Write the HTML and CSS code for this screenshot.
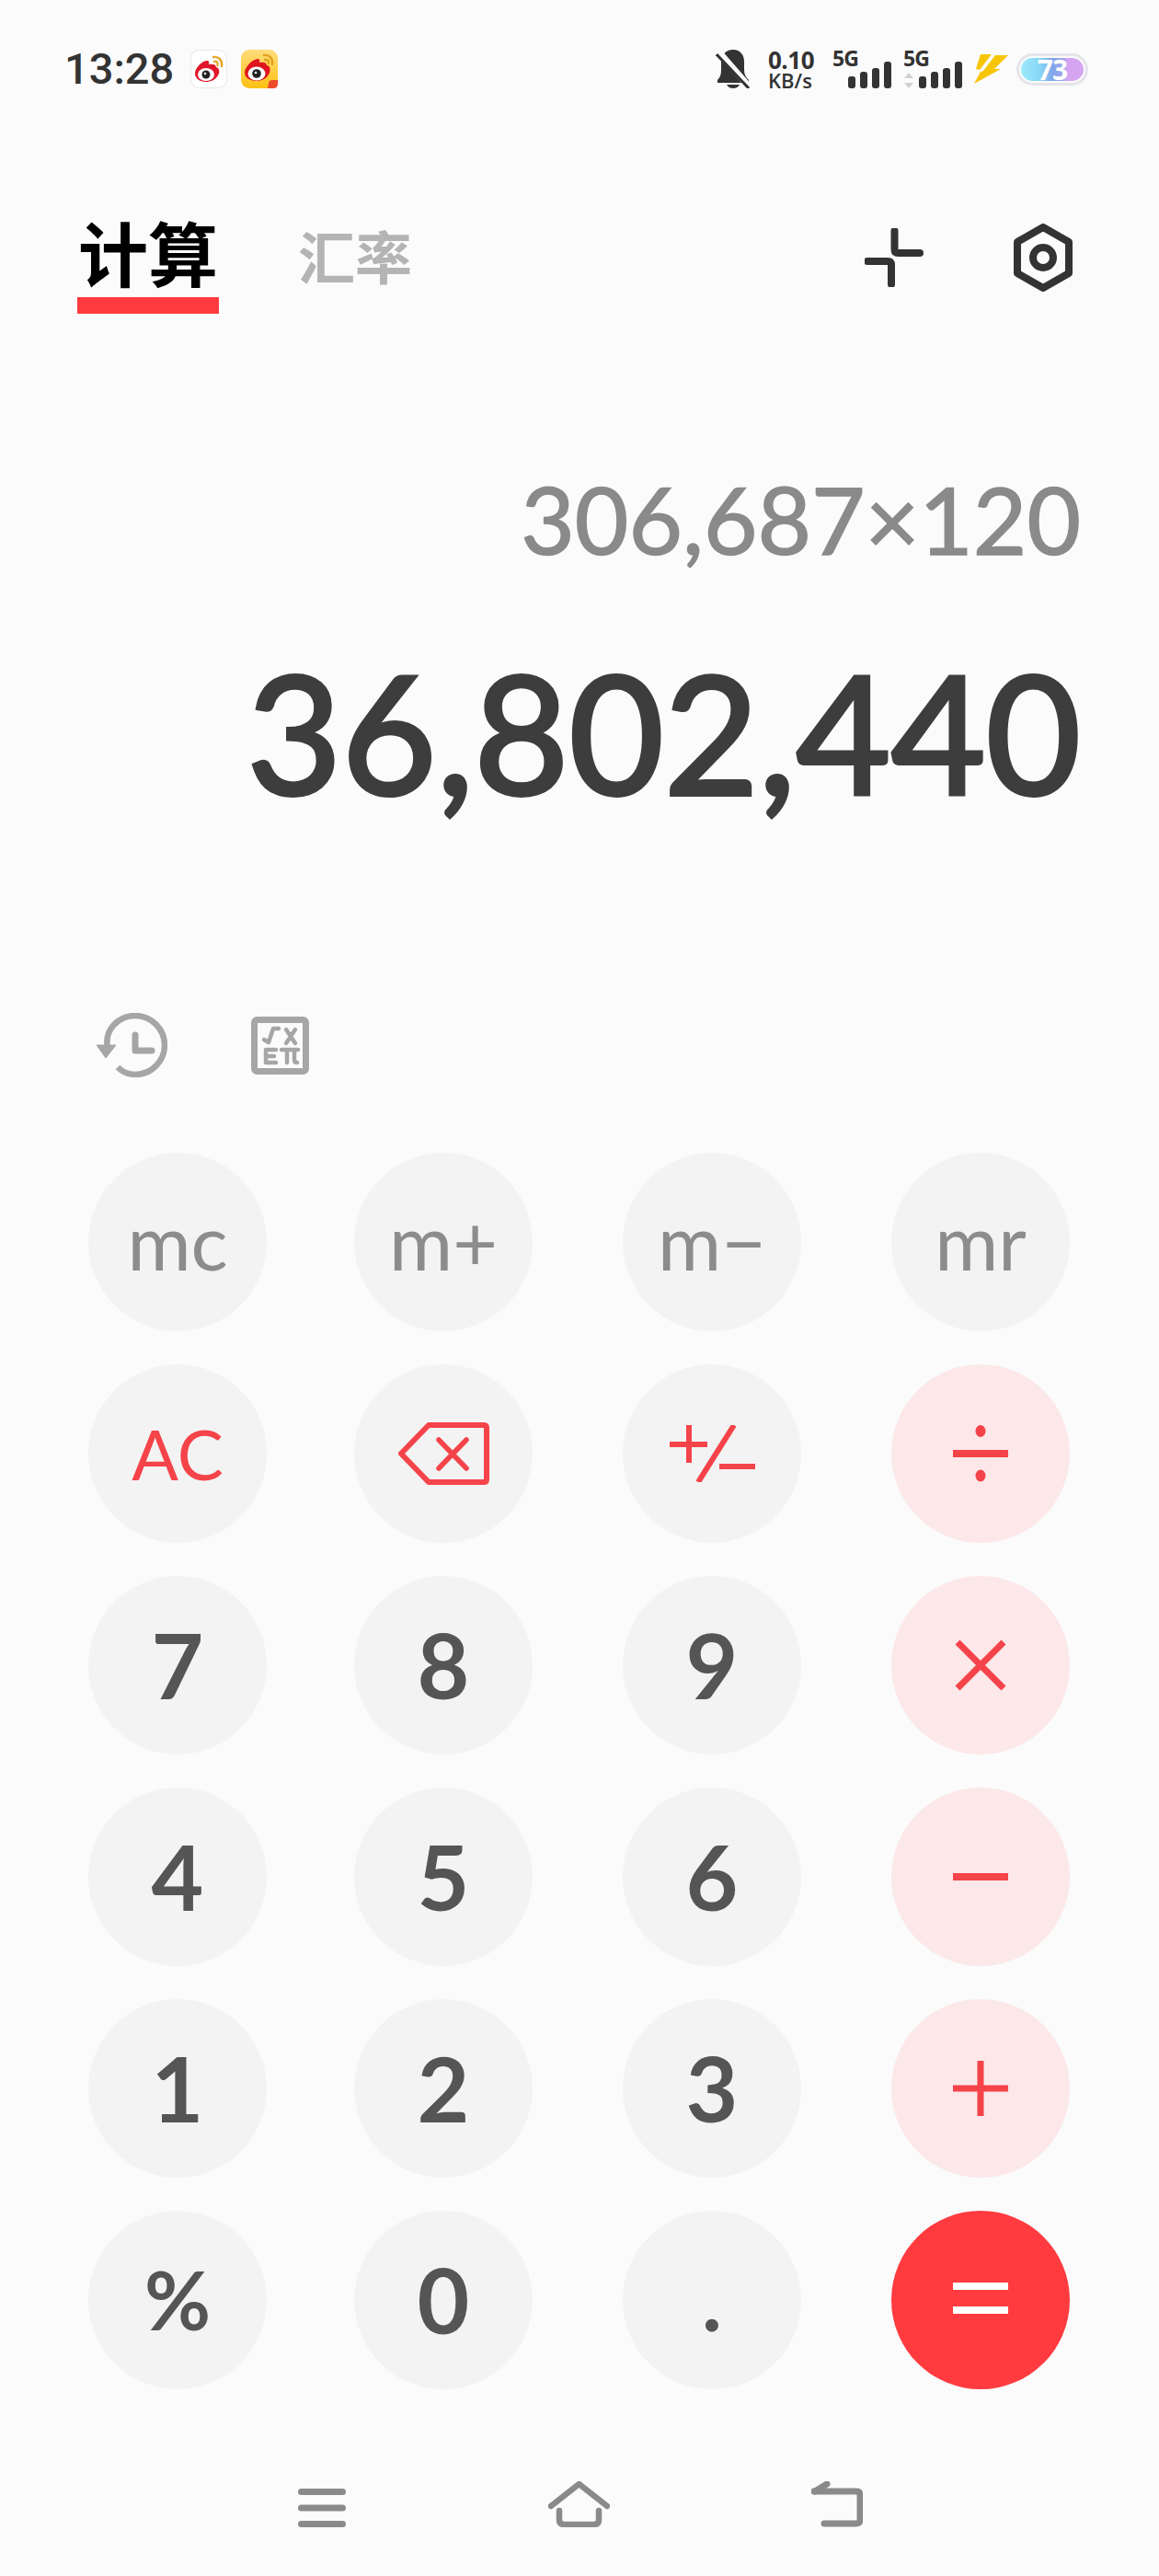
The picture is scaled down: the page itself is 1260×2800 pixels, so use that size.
FILE: index.html
```html
<!DOCTYPE html>
<html lang="zh">
<head>
<meta charset="utf-8">
<title>计算器</title>
<link rel="stylesheet" href="styles.css">
</head>
<body>
<div class="page">
  <header class="status">
    <div class="status-left">
      <span class="time">13:28</span>
      <svg class="app-icon first" viewBox="0 0 40 42"><rect x=".5" y=".5" width="39" height="41" rx="9" fill="#fff" stroke="#e8e8e8"/><path d="M5 26c0-7 9-15 14-14 2 1 1 4 1 4 4-1 8 0 8 3 4 1 4 6 2 9-3 5-8 7-13 7-7 0-12-4-12-9z" fill="#e0162b"/><ellipse cx="17" cy="27" rx="9" ry="7" fill="#fff"/><circle cx="17" cy="27" r="4.500" fill="#222"/><circle cx="16" cy="26" r="1.300" fill="#fff"/><path d="M25 8c6-1 10 4 9 10M26 13c3-1 4 1 3.500 4" fill="none" stroke="#e5a72a" stroke-width="2.400" stroke-linecap="round"/></svg>
      <svg class="app-icon" viewBox="0 0 40 42"><defs><linearGradient id="yg" x1="0" y1="0" x2="0" y2="1"><stop offset="0" stop-color="#ffdc7c"/><stop offset="1" stop-color="#fdc113"/></linearGradient></defs><rect width="40" height="42" rx="9" fill="url(#yg)"/><path d="M4 25c0-7 10-16 15-15 2 1 1 4 1 4 4-1 8 0 8 3 5 1 4 7 2 10-3 5-8 7-13 7-8 0-13-4-13-9z" fill="#e0161f"/><ellipse cx="17" cy="26" rx="9.500" ry="7.500" fill="#fff"/><circle cx="17" cy="26" r="4.800" fill="#222"/><circle cx="16" cy="25" r="1.300" fill="#fff"/><path d="M25 6c6-1 10 4 9 10M26 11c3-1 4 1 4 4" fill="none" stroke="#e2a11d" stroke-width="2.400" stroke-linecap="round"/><path d="M29 42l1-6q1-3 4-3h6v4q0 5-5 5z" fill="#ee4b2b"/></svg>
    </div>
    <div class="status-right">
      <svg class="bell" viewBox="0 0 38 42"><path d="M19 0c8 0 12 6 12 13v9c0 5 2 8 5 11v3H2v-3c3-3 4-6 4-11v-9C6 6 11 0 19 0z" fill="#333"/><path d="M12 38h14c-2 3-4 4-7 4s-5-1-7-4z" fill="#333"/><path d="M4 3l33 38" stroke="#fbfbfb" stroke-width="7"/><path d="M1 5l35 37" stroke="#333" stroke-width="3"/></svg>
      <div class="speed"><span class="speed-num">0.10</span><span class="speed-unit">KB/s</span></div>
      <div class="signal first-signal">
        <span class="five-g">5G</span>
        <svg class="signal-bars" viewBox="0 0 64 42"><g fill="#333"><rect x="17" y="29" width="8" height="13" rx="3"/><rect x="30" y="24" width="8" height="18" rx="3"/><rect x="43" y="20" width="8" height="22" rx="3"/><rect x="56" y="13" width="8" height="29" rx="3"/></g></svg>
      </div>
      <div class="signal">
        <span class="five-g">5G</span>
        <svg class="signal-bars" viewBox="0 0 64 42"><path d="M6 25l5 6H1zM6 42l5-6H1z" fill="#d0d0d0"/><g fill="#333"><rect x="17" y="29" width="8" height="13" rx="3"/><rect x="30" y="24" width="8" height="18" rx="3"/><rect x="43" y="20" width="8" height="22" rx="3"/><rect x="56" y="13" width="8" height="29" rx="3"/></g></svg>
      </div>
      <svg class="bolt" viewBox="0 0 39 32"><path d="M8 0h12L7 17l-4-1z" fill="#f7c508"/><path d="M24 1h14L23 16h7L1 32l7-13 3-1z" fill="#f7c508"/></svg>
      <div class="battery"><span class="battery-num">73</span></div>
    </div>
  </header>

  <nav class="tabs">
    <div class="tab-group">
      <div class="tab-active">计算</div>
      <div class="tab">汇率</div>
    </div>
    <div class="tab-icons">
      <svg class="collapse" viewBox="0 0 64 64"><path d="M32.500 3v20q0 4 4 4H60M3 36h22q4 0 4 4v21" fill="none" stroke="#333" stroke-width="8" stroke-linecap="round"/></svg>
      <svg class="hex" viewBox="0 0 64 74"><path d="M32 4l28 16v34L32 70 4 54V20z" fill="none" stroke="#333" stroke-width="8" stroke-linejoin="round"/><circle cx="32" cy="37" r="11" fill="none" stroke="#333" stroke-width="8"/></svg>
    </div>
  </nav>

  <section class="display">
    <div class="expression">306,687×120</div>
    <div class="result">36,802,440</div>
  </section>

  <div class="tools">
    <svg class="history" viewBox="0 0 77 70"><path d="M12 38C8 18 24 3 42 3c18 0 32 15 32 32S60 67 42 67c-8 0-14-3-19-8" fill="none" stroke="#a6a6a6" stroke-width="6.500"/><path d="M0 35h21L10 49z" fill="#a6a6a6" stroke="#a6a6a6" stroke-width="1" stroke-linejoin="round"/><path d="M42 24v17h18" fill="none" stroke="#a6a6a6" stroke-width="7" stroke-linecap="round" stroke-linejoin="round"/></svg>
    <svg class="formula" viewBox="0 0 63 63"><rect x="3.500" y="3.500" width="56" height="56" rx="3" fill="none" stroke="#a6a6a6" stroke-width="7"/><g fill="none" stroke="#a6a6a6" stroke-width="4.500" stroke-linecap="round" stroke-linejoin="round"><path d="M14 25l5 3 5-15h6M38 14l10 15M48 14L38 29" /><path d="M27 36H16v14h11M16 43h9M33 36h18M39 36v14M47 36v11q0 3 3 3"/></g></svg>
  </div>

  <main class="keys">
    <button class="key soft">mc</button>
    <button class="key soft">m+</button>
    <button class="key soft">m−</button>
    <button class="key soft">mr</button>

    <button class="key red-text">AC</button>
    <button class="key"><svg class="icon-back" viewBox="0 0 99 68"><path d="M33 3h60q3 0 3 3v56q0 3-3 3H33L3 34z" fill="none" stroke="#f5434a" stroke-width="6" stroke-linejoin="round"/><path d="M44 19l30 31M74 19L44 50" stroke="#f5434a" stroke-width="5.500" stroke-linecap="round"/></svg></button>
    <button class="key"><svg class="icon-pm" viewBox="0 0 93 62"><path d="M0 21h41M21 0v41M70 0L31 62M54 45h39" fill="none" stroke="#f5434a" stroke-width="6"/></svg></button>
    <button class="key op"><svg class="icon-op" viewBox="0 0 60 62"><rect y="27" width="60" height="8" fill="#f5434a"/><ellipse cx="30" cy="6.500" rx="5.500" ry="6.500" fill="#f5434a"/><ellipse cx="30" cy="55" rx="5.500" ry="6.500" fill="#f5434a"/></svg></button>

    <button class="key digit">7</button>
    <button class="key digit">8</button>
    <button class="key digit">9</button>
    <button class="key op"><svg class="icon-op" viewBox="0 0 60 62"><path d="M5 6l50 50M55 6L5 56" stroke="#f5434a" stroke-width="7"/></svg></button>

    <button class="key digit">4</button>
    <button class="key digit">5</button>
    <button class="key digit">6</button>
    <button class="key op"><svg class="icon-op" viewBox="0 0 60 62"><rect y="27" width="60" height="8" fill="#f5434a"/></svg></button>

    <button class="key digit">1</button>
    <button class="key digit">2</button>
    <button class="key digit">3</button>
    <button class="key op"><svg class="icon-op" viewBox="0 0 60 62"><path d="M0 31h60M30 1v60" stroke="#f5434a" stroke-width="7"/></svg></button>

    <button class="key digit percent">%</button>
    <button class="key digit">0</button>
    <button class="key digit dot">.</button>
    <button class="key equals"><svg class="icon-op" viewBox="0 0 60 62"><rect y="12" width="60" height="8" fill="#fff"/><rect y="38" width="60" height="8" fill="#fff"/></svg></button>
  </main>

  <footer class="navbar">
    <svg class="nav-menu" viewBox="0 0 52 42"><path d="M3.500 3.500h45M3.500 21h45M3.500 38.500h45" stroke="#8a8a8a" stroke-width="7" stroke-linecap="round"/></svg>
    <svg class="nav-home" viewBox="0 0 67 50"><path d="M3 27L33.500 3 64 27" fill="none" stroke="#8a8a8a" stroke-width="6.500" stroke-linecap="round" stroke-linejoin="round"/><path d="M12 32v10q0 5 5 5h33q5 0 5-5V32" fill="none" stroke="#8a8a8a" stroke-width="6.500" stroke-linecap="round"/></svg>
    <svg class="nav-back" viewBox="0 0 56 50"><path d="M3 11h46q4 0 4 4v27q0 4-4 4H14" fill="none" stroke="#8a8a8a" stroke-width="7" stroke-linecap="round"/><path d="M17 3L4 11" stroke="#8a8a8a" stroke-width="7" stroke-linecap="round"/></svg>
  </footer>
</div>
</body>
</html>
```
FILE: styles.css
```css
* { box-sizing: border-box; }
html, body { margin: 0; padding: 0; background: #fbfbfb; }
body { font-family: "Noto Sans", "Noto Sans CJK SC", sans-serif; }
svg { display: block; flex: none; }

.page { width: 1260px; height: 2800px; display: flex; flex-direction: column; background: #fbfbfb; overflow: hidden; }

/* Status bar */
.status { height: 42px; margin: 54px 77px 0 70px; display: flex; justify-content: space-between; align-items: center; }
.status-left, .status-right { display: flex; align-items: center; }
.time { font-family: Roboto, sans-serif; font-size: 47px; font-weight: 500; line-height: 42px; color: #333; width: 117px; white-space: nowrap; }
.app-icon { width: 40px; height: 42px; margin-left: 15px; }
.app-icon.first { margin-left: 20px; }
.bell { width: 38px; height: 42px; }
.speed { margin-left: 19px; width: 52px; display: flex; flex-direction: column; color: #333; font-family: "Open Sans", sans-serif; font-weight: 700; align-items: flex-start; }
.speed-num { font-size: 26px; line-height: 24px; letter-spacing: -.5px; }
.speed-unit { font-size: 22px; line-height: 20px; font-weight: 600; }
.signal { width: 64px; height: 42px; margin-left: 13px; position: relative; }
.first-signal { margin-left: 18px; }
.signal-bars { width: 64px; height: 42px; }
.five-g { position: absolute; left: 0; top: 0; font-family: "Open Sans", sans-serif; font-weight: 700; font-size: 23px; line-height: 18px; letter-spacing: -1px; color: #333; }
.bolt { width: 39px; height: 32px; margin-left: 12px; }
.battery { width: 78px; height: 35px; margin-left: 8px; border-radius: 18px; border: 3px solid #e4e4ea; padding: 2px; display: flex; }
.battery-num { flex: 1; height: 25px; border-radius: 13px; background: linear-gradient(90deg, #9be9fb 0%, #88d6f5 30%, #7ea6ea 50%, #a8a6ee 70%, #d5a5f2 74%, #d5a5f2 100%); color: #fff; font-family: "Open Sans", sans-serif; font-weight: 700; font-size: 30px; line-height: 25px; text-align: center; letter-spacing: -1px; }

/* Tabs */
.tabs { margin: 147px 94px 0 84px; display: flex; justify-content: space-between; align-items: flex-start; }
.tab-group { display: flex; align-items: flex-end; }
.tab-active { width: 154px; height: 98px; border-bottom: 18px solid #ff3b3f; font-size: 76px; line-height: 60px; font-weight: 700; color: #000; text-align: center; font-family: "Noto Sans CJK SC", sans-serif; white-space: nowrap; }
.tab { width: 122px; height: 60px; margin: 0 0 34px 86px; font-size: 62px; line-height: 60px; font-weight: 700; color: #b4b4b4; font-family: "Noto Sans CJK SC", sans-serif; white-space: nowrap; }
.tab-icons { display: flex; align-items: center; gap: 98px; height: 73px; }
.collapse { width: 64px; height: 64px; }
.hex { width: 64px; height: 74px; }

/* Display */
.display { margin: 163px 85px 0 0; display: flex; flex-direction: column; align-items: flex-end; font-family: Lato, "Noto Sans", sans-serif; }
.expression { font-size: 101px; line-height: 120px; color: #8a8a8a; font-weight: 400; white-space: nowrap; -webkit-text-stroke: 1.5px #8a8a8a; }
.result { margin-top: 81px; font-size: 178px; line-height: 180px; color: #3d3d3d; font-weight: 400; white-space: nowrap; -webkit-text-stroke: 4px #3d3d3d; }

/* Tool row */
.tools { margin: 216px 0 0 105px; display: flex; align-items: center; gap: 91px; height: 70px; }
.history { width: 77px; height: 70px; }
.formula { width: 63px; height: 63px; }

/* Keypad */
.keys { margin: 82px 0 0 96px; display: grid; grid-template-columns: 289px 292px 292px 194px; grid-auto-rows: 194px; row-gap: 36px; }
.key { width: 194px; height: 194px; border: 0; padding: 0; border-radius: 50%; background: #f3f3f3; display: flex; align-items: center; justify-content: center; font-family: Lato, "Noto Sans", sans-serif; color: #555; }
.soft { color: #8c8c8c; font-size: 84px; font-weight: 400; padding-bottom: 4px; }
.red-text { color: #f5434a; font-size: 75px; font-weight: 400; }
.digit { font-size: 98px; font-weight: 700; padding-bottom: 3px; }
.percent { font-size: 88px; font-weight: 700; }
.dot { font-size: 92px; font-weight: 700; }
.op { background: #fce8e9; }
.equals { background: #ff3b3f; }
.icon-back { width: 99px; height: 68px; }
.icon-pm { width: 93px; height: 62px; }
.icon-op { width: 60px; height: 62px; }

/* Navigation bar */
.navbar { margin: 100px 322px 0 324px; display: flex; justify-content: space-between; align-items: flex-end; }
.nav-menu { width: 52px; height: 42px; }
.nav-home { width: 67px; height: 50px; }
.nav-back { width: 56px; height: 50px; }
```
